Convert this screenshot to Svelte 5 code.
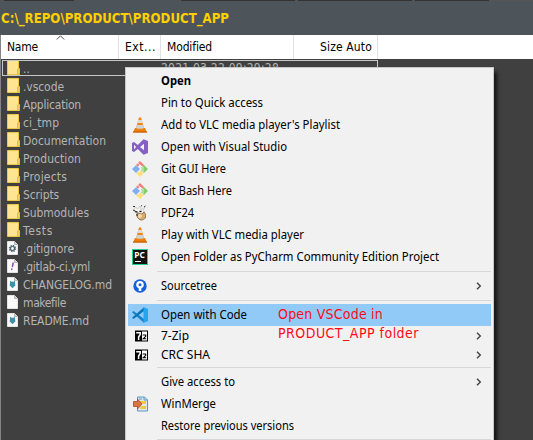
<script>
  const files = [
    ['..', 'folder', 7],
    ['.vscode', 'folder', 41],
    ['Application', 'folder', 58],
    ['ci_tmp', 'folder', 36],
    ['Documentation', 'folder', 83],
    ['Production', 'folder', 58],
    ['Projects', 'folder', 44],
    ['Scripts', 'folder', 36],
    ['Submodules', 'folder', 66],
    ['Tests', 'folder', 30],
    ['.gitignore', 'gear', 51],
    ['.gitlab-ci.yml', 'yml', 67],
    ['CHANGELOG.md', 'md', 89],
    ['makefile', 'file', 43],
    ['README.md', 'md', 66]
  ];

  const menu = [
    { label: 'Open', w: 30, bold: true },
    { label: 'Pin to Quick access', w: 102 },
    { label: "Add to VLC media player's Playlist", w: 179, icon: 'vlc' },
    { label: 'Open with Visual Studio', w: 126, icon: 'vs' },
    { label: 'Git GUI Here', w: 65, icon: 'git' },
    { label: 'Git Bash Here', w: 71, icon: 'git' },
    { label: 'PDF24', w: 33, icon: 'pdf' },
    { label: 'Play with VLC media player', w: 143, icon: 'vlc' },
    { label: 'Open Folder as PyCharm Community Edition Project', w: 278, icon: 'pc' },
    { sep: true },
    { label: 'Sourcetree', w: 56, icon: 'st', arrow: true },
    { sep: true },
    { label: 'Open with Code', w: 86, icon: 'code', hot: true },
    { label: '7-Zip', w: 28, icon: 'zip', arrow: true, h: 19 },
    { label: 'CRC SHA', w: 49, icon: 'zip', arrow: true, h: 19 },
    { sep: true },
    { label: 'Give access to', w: 74, arrow: true },
    { label: 'WinMerge', w: 55, icon: 'wm' },
    { label: 'Restore previous versions', w: 133, h: 21 },
    { sep: true }
  ];

  // Spreads the letters so that the label takes up the given width.
  function fit(node, width) {
    const natural = node.getBoundingClientRect().width;
    node.style.letterSpacing = (width - natural) / node.textContent.length + 'px';
  }

  // Narrows the glyphs themselves so that the label takes up the given width.
  function squeeze(node, width) {
    const natural = node.getBoundingClientRect().width;
    node.style.transform = `scaleX(${width / natural})`;
  }
</script>

<div class="window">
  <div class="tabs"><i class="t1"></i><i class="t2"></i><i class="t3"></i><i class="t4"></i><i class="t5"></i></div>
  <div class="path"><span use:squeeze={228}>C:\_REPO\PRODUCT\PRODUCT_APP</span></div>
  <div class="panel">
    <div class="head">
      <div class="col name"><span use:fit={31}>Name</span>
        <svg class="sort" width="9" height="5" viewBox="0 0 9 5"><path d="M.8 4.5 4.5.8 8.2 4.5" fill="none" stroke="#555" /></svg>
      </div>
      <div class="col ext"><span use:fit={31}>Ext...</span></div>
      <div class="col mod"><span use:fit={45}>Modified</span></div>
      <div class="col size"><span use:fit={52}>Size Auto</span></div>
    </div>
    <div class="list">
      {#each files as [name, kind, w], i}
        <div class="row" class:current={i === 0}>
          <svg width="13" height="16" viewBox="0 0 13 16">
            {#if kind === 'folder'}
              <path d="M.5.5h11v8h1v6H.5z" fill="#ffe491" stroke="#efc643" />
              <path d="M10.5 14V9h1.5v5z" fill="#ffe491" stroke="#e9bd35" />
            {:else}
              <path d="M.5 1.5h7l3 3v10H.5z" fill="#fafafa" stroke="#e3e3e3" />
              <path d="M7.5 1.5v3h3" fill="#ccc" stroke="#aaa" stroke-width=".8" />
              {#if kind === 'gear'}
                <circle cx="5.5" cy="8.500" r="3.1" fill="none" stroke="#536975" stroke-width="1.2" stroke-dasharray="1.3 1.13" />
                <circle cx="5.5" cy="8.500" r="2.1" fill="none" stroke="#536975" stroke-width="1.4" />
              {:else if kind === 'yml'}
                <path d="M6.3 4.500 5.3 9M4.900 10.4l-.3 1.5" fill="none" stroke="#8a4bad" stroke-width="1.500" />
              {:else if kind === 'md'}
                <path d="M3 4.700 4.500 5.700h2L8 4.700v4h1L5.500 12.2 2 8.700h1z" fill="#428fac" />
              {/if}
            {/if}
          </svg>
          <span class="fname" use:fit={w}>{name}</span>
          {#if i === 0}<span class="date" use:fit={118}>2021.03.22 09:29:28</span>{/if}
        </div>
      {/each}
    </div>
  </div>

  <div class="menu">
    {#each menu as item}
      {#if item.sep}
        <div class="sep"></div>
      {:else}
        <div class="item" class:hot={item.hot} class:bold={item.bold} class:short={item.h === 19} class:mid={item.h === 21}>
          <svg class="ico" width="16" height="16" viewBox="0 0 16 16">
            {#if item.icon === 'vlc'}
              <path d="M3 11h10l2 4.5H1z" fill="#ef7d0a" />
              <path d="M7 .5h2L12.2 12Q8 14 3.8 12z" fill="#f28412" />
              <path d="m6.3 3.1h3.4l.8 2.8h-5z" fill="#ddd" />
              <path d="M4.9 8h6.2l.9 3q-4 1.7-8 0z" fill="#ccd2d5" />
              <path d="M1 15h14" stroke="#b85b05" />
            {:else if item.icon === 'vs'}
              <path d="M11.5.3 16 2v12l-4.5 1.7L5.8 10 2 13 0 12V4l2-1 3.8 3zM12 4.8 8 8l4 3.2zM2 5.8v4.4L4.2 8z" fill="#865fc5" fill-rule="evenodd" />
            {:else if item.icon === 'git'}
              <path d="m8 0 4 4-1.7 1.7L8 3.5 5.8 5.7 4 4z" fill="#f47c7c" />
              <path d="M4 4.2 8 8.1 4 12 0 8z" fill="#7cb0f3" />
              <path d="m12 4 4 4-4 4-1.3-1.2L9 9.2 10.2 8 9 6.8z" fill="#85cd68" />
              <path d="m8 9 3.5 3.5L8 16l-3.8-3.8L6 10.5l1.5 1z" fill="#ffdf7c" />
              <path d="m5 1.5 6 5M11 6v5" stroke="#f1f1f1" stroke-width=".8" />
            {:else if item.icon === 'pdf'}
              <path d="m3 2 3 2 2-3 1 4 4-3-2 4 2 1-3 1-7-1-1-2z" fill="#fbf9f2" stroke="#aaa" stroke-width=".5" />
              <path d="M1 1.5h2M9 .8h1M12 2l1.500-1M1 5l3 1.500" stroke="#333" />
              <path d="M5 8 10 9l2-2 1.500 2v4l-3 2H8l-3-3z" fill="#d9aa6c" stroke="#806040" stroke-width=".7" />
              <circle cx="8" cy="11" r="2" fill="#f6d9a8" />
              <path d="M3.500 6.800h2m2-.5h2M4.500 9.500l1 1" stroke="#111" stroke-width="1.2" />
            {:else if item.icon === 'pc'}
              <rect x=".5" y=".5" width="15" height="15" fill="#111" stroke="#20cf91" />
              <text x="2.3" y="9" font-size="8" font-weight="700" fill="#fff" textLength="10.5" lengthAdjust="spacingAndGlyphs">PC</text>
              <path d="M3 12.5h6" stroke="#fff" />
            {:else if item.icon === 'st'}
              <circle cx="8" cy="8" r="6.7" fill="#155fe0" />
              <path d="M8 3a3.7 3.7 0 0 1 1.3 7.2V13H6.7v-2.8A3.7 3.7 0 0 1 8 3z" fill="#fff" />
              <circle cx="8" cy="6.8" r="1.5" fill="#155fe0" />
            {:else if item.icon === 'code'}
              <path d="M0 5.2 1.5 4 12 12v3.8z" fill="#1681c9" />
              <path d="M0 10.8 1.5 12 12 4V.2z" fill="#0877b9" />
              <path d="M11.5 0 16 2v12l-4.5 2z" fill="#27a4ee" />
            {:else if item.icon === 'zip'}
              <path d="M3 2.5h13v11H3z" fill="#000" />
              <path d="M10 3.5h5v9h-5z" fill="#fff" />
              <path d="M4.2 4.8h4v1.5L6.6 9v3" fill="none" stroke="#fff" stroke-width="1.5" />
              <path d="M10.7 7h3v1.3l-2.5 2.5h3" fill="none" stroke="#000" stroke-width="1.1" />
            {:else if item.icon === 'wm'}
              <path d="M5.500 1h7l3 3v11h-10z" fill="#dceaf4" stroke="#5f95bd" />
              <path d="M12 1v3h3.5M7 3h3" fill="none" stroke="#5f95bd" />
              <path d="M8 5h6v3H8zm1 5h5v3H8z" fill="#f2ca42" />
              <path d="M1.500 5.500h4V3L10 8l-4.500 5v-2.500h-4z" fill="#dc7441" stroke="#a34d2a" stroke-width=".8" />
            {/if}
          </svg>
          <span class="label" use:squeeze={item.w}>{item.label}</span>
          {#if item.arrow}
            <svg class="arrow" width="6" height="8" viewBox="0 0 6 8"><path d="M1 .7 4.300 4 1 7.300" fill="none" stroke="#444" stroke-width="1.400" /></svg>
          {/if}
        </div>
      {/if}
    {/each}
  </div>

  <div class="note">
    <div><span use:fit={105}>Open VSCode in</span></div>
    <div><span use:fit={141}>PRODUCT_APP folder</span></div>
  </div>
</div>

<style>
  :global(body) { margin: 0; overflow: hidden; }
  .window {
    position: relative;
    width: 533px;
    height: 440px;
    overflow: hidden;
    background: #404040;
    font: 12px/18px 'DejaVu Sans Condensed', 'DejaVu Sans', sans-serif;
    font-stretch: condensed;
    display: flex;
    flex-direction: column;
  }
  span { white-space: pre; display: inline-block; transform-origin: 0 50%; }
  .tabs { height: 1px; display: flex; background: #4d555b; flex: none; }
  .tabs i { background: #333; }
  .t1 { width: 70px; margin-left: 4px; }
  .t2 { width: 114px; margin-left: 107px; }
  .t3 { width: 114px; margin-left: 3px; }
  .t4 { width: 74px; margin-left: 3px; }
  .tabs .t5 { flex: 1; background: #555; }
  .path {
    height: 34px;
    flex: none;
    background: #4d555b;
    color: #ffcf00;
    font-weight: bold;
    font-size: 13.5px;
    line-height: 35px;
    padding-left: 1px;
  }
  .panel { flex: 1; border-left: 1px solid #858585; }
  .head { height: 24px; background: #fff; color: #000; display: flex; line-height: 25px; }
  .col { border-right: 1px solid #e2e2e2; box-sizing: border-box; padding-left: 6px; position: relative; }
  .name { width: 118px; }
  .ext { width: 42px; padding-left: 6px; }
  .mod { width: 133px; }
  .size { width: 84px; padding-left: 26px; }
  .sort { position: absolute; left: 55px; top: 0; }
  .list { padding: 1px 0 0 1px; color: #b4b4b4; }
  .row { height: 18px; padding-left: 5px; display: flex; align-items: flex-start; width: 376px; box-sizing: border-box; }
  .row svg { flex: none; }
  .current { height: 16px; margin-bottom: 2px; outline: 1px solid #c4c8c6; outline-offset: -1px; }
  .fname { margin-left: 3px; line-height: 18px; }
  .date { margin-left: 131px; line-height: 17px; }
  .menu {
    position: absolute;
    left: 125px;
    top: 67px;
    width: 369px;
    height: 390px;
    box-sizing: border-box;
    border: 1px solid #c8c8c8;
    background: #f1f1f1;
    padding: 2px;
    box-shadow: 4px 4px 4px -1px rgba(0, 0, 0, .7);
    color: #000;
    font-family: 'Noto Sans', 'Open Sans', sans-serif;
  }
  .item { height: 22px; display: flex; align-items: center; padding-left: 4px; }
  .short { height: 19px; }
  .mid { height: 21px; }
  .hot { background: #91c9f7; }
  .bold { font-weight: bold; }
  .ico { flex: none; }
  .label { margin-left: 13px; }
  .arrow { margin-left: auto; margin-right: 9px; }
  .sep { height: 1px; background: #d7d7d7; margin: 3px 0 3px 29px; }
  .note { position: absolute; left: 278px; top: 305px; color: #fe0b16; font-size: 14px; line-height: 19px; font-family: 'DejaVu Sans Condensed', 'DejaVu Sans', sans-serif; }
</style>
